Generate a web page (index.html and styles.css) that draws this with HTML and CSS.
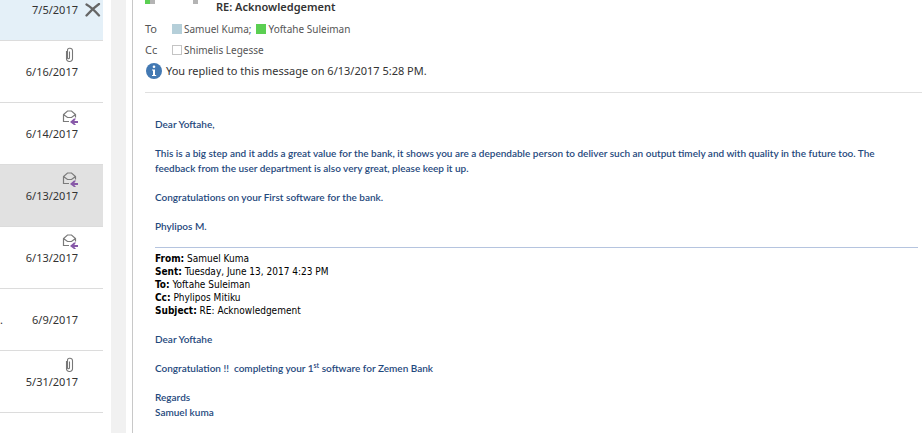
FILE: index.html
```html
<!DOCTYPE html>
<html lang="en">
<head>
<meta charset="utf-8">
<title>RE: Acknowledgement</title>
<link rel="stylesheet" href="styles.css">
</head>
<body>
<svg class="defs" aria-hidden="true">
  <symbol id="clip" viewBox="0 0 16 16">
    <path d="M7.500 4.500v6.200a1 1 0 0 1-2 0V3.200a2 2 0 0 1 2-2h.5a2.500 2.500 0 0 1 2.500 2.500v8a2.700 2.700 0 0 1-2.700 2.800h-.6a2.700 2.700 0 0 1-2.700-2.800V4" fill="none" stroke="#777" stroke-width="1.100"/>
  </symbol>
  <symbol id="replied" viewBox="0 0 16 16">
    <path d="M7 12.500H1.500V5.500L5.500 2h4l4 3.500v3M1.500 5.500l4 3h4l4-3" fill="none" stroke="#7a7a7a" stroke-width="1.200"/>
    <path d="M8 13l4-3.500h2L12.300 12H16v2h-3.700l1.700 2h-2z" fill="#8758a8"/>
  </symbol>
</svg>
<div class="app">
  <ul class="list">
    <li class="row first">
      <time>7/5/2017</time>
      <button class="delete" type="button" aria-label="Delete">
        <svg width="16" height="14" viewBox="0 0 16 14"><path d="M1.500 1.500C5 3.500 10 8 14 12.500M14 1C9 4.500 5 8.500 1.500 12.500" fill="none" stroke="#666" stroke-width="2.300" stroke-linecap="round"/></svg>
      </button>
    </li>
    <li class="row"><svg class="icon"><use href="#clip"/></svg><time>6/16/2017</time></li>
    <li class="row"><svg class="icon"><use href="#replied"/></svg><time>6/14/2017</time></li>
    <li class="row selected"><svg class="icon"><use href="#replied"/></svg><time>6/13/2017</time></li>
    <li class="row"><svg class="icon"><use href="#replied"/></svg><time>6/13/2017</time></li>
    <li class="row"><span class="more">.</span><time>6/9/2017</time></li>
    <li class="row"><svg class="icon"><use href="#clip"/></svg><time>5/31/2017</time></li>
  </ul>
  <div class="scrollbar"></div>
  <main class="message">
    <header class="head">
      <div class="top">
        <span class="presence"></span><span class="photo"></span>
        <h1>RE: Acknowledgement</h1>
      </div>
      <div class="people"><span class="label">To</span><i class="status away"></i><span class="name">Samuel Kuma;</span><i class="status online"></i><span class="name">Yoftahe Suleiman</span></div>
      <div class="people"><span class="label">Cc</span><i class="status none"></i><span class="name">Shimelis Legesse</span></div>
      <div class="info">
        <svg width="16" height="16" viewBox="0 0 16 16"><circle cx="8" cy="8" r="8" fill="#4379b3"/><circle cx="8" cy="3.800" r="1.300" fill="#fff"/><path d="M6 6.500h3v5.500h1.200v1H6v-1h1V7.500H6z" fill="#fff"/></svg>
        <span>You replied to this message on 6/13/2017 5:28 PM.</span>
      </div>
    </header>
    <article class="body">
      <p>Dear Yoftahe,</p>
      <p>This is a big step and it adds a great value for the bank, it shows you are a dependable person to deliver such an output timely and with quality in the future too. The feedback from the user department is also very great, please keep it up.</p>
      <p>Congratulations on your First software for the bank.</p>
      <p>Phylipos M.</p>
      <div class="quoted">
        <div><b>From:</b> Samuel Kuma</div>
        <div><b>Sent:</b> Tuesday, June 13, 2017 4:23 PM</div>
        <div><b>To:</b> Yoftahe Suleiman</div>
        <div><b>Cc:</b> Phylipos Mitiku</div>
        <div><b>Subject:</b> RE: Acknowledgement</div>
      </div>
      <p>Dear Yoftahe</p>
      <p>Congratulation !!&nbsp; completing your 1<sup>st</sup> software for Zemen Bank</p>
      <p>Regards<br>Samuel kuma</p>
    </article>
  </main>
</div>
</body>
</html>
```
FILE: styles.css
```css
* { box-sizing: border-box; }
body {
  margin: 0;
  background: #fff;
  color: #333;
  font: 11px/18px "Noto Sans", "Open Sans", sans-serif;
  overflow: hidden;
}
.defs { display: none; }
.app {
  display: grid;
  grid-template-columns: 103px 15px minmax(0, 1fr);
  min-height: 100vh;
}
.list { margin: 0; padding: 0; list-style: none; }
.row {
  display: grid;
  grid-template-columns: 1fr auto;
  grid-template-rows: 22px 18px;
  height: 62px;
  padding-right: 25px;
  border-bottom: 1px solid #dcdcdc;
}
.row time { grid-area: 2 / 2; }
.row .icon {
  grid-area: 1 / 2;
  justify-self: end;
  align-self: end;
  width: 16px;
  height: 16px;
}
.more { grid-area: 2 / 1; }
.first {
  grid-template-columns: 1fr auto 16px;
  grid-template-rows: 1px 18px;
  column-gap: 7px;
  height: 41px;
  padding-right: 2px;
  background: #e4f0f8;
}
.selected { background: #e1e1e1; }
.delete {
  grid-area: 2 / 3;
  display: flex;
  align-items: center;
  padding: 0;
  border: 0;
  background: none;
}
.scrollbar { margin-left: 8px; margin-right: -8px; background: #f1f1f1; }
.message { margin-left: 14px; border-left: 1px solid #c8c8c8; }
.head { margin-left: 12px; border-bottom: 1px solid #e0e0e0; padding-bottom: 11px; }
.top { display: flex; height: 18px; }
.presence { width: 10px; height: 4px; background: linear-gradient(90deg, #5bcf52 50%, #b4b4b4 50%); }
.photo { width: 5px; height: 4px; margin-left: 38px; background: #b4b4b4; }
h1 { margin: 0 0 0 18px; font-size: 11px; line-height: 14px; font-weight: 600; }
.people { display: flex; align-items: center; height: 21px; color: #555; font-size: 10px; }
.label { width: 27px; font-size: 11px; }
.status { width: 10px; height: 10px; margin-right: 2px; }
.away { background: #b5cfd9; }
.online { background: #5bcf52; margin-left: 5px; }
.none { border: 1px solid #c4c4c4; background: #fff; }
.info { display: flex; align-items: center; gap: 4px; height: 21px; padding-left: 1px; }
.body {
  padding: 24px 4px 0 22px;
  color: #1f497d;
  font: 600 10px/15px Lato, sans-serif;
}
.body p { margin: 0 20px 14px 0; }
.quoted {
  margin: -1px 0 15px;
  padding-top: 4px;
  border-top: 1px solid #b5c4df;
  color: #000;
  font: 10px/13px "DejaVu Sans Condensed", "DejaVu Sans", sans-serif;
}
sup { font-size: 7px; line-height: 0; }
```
